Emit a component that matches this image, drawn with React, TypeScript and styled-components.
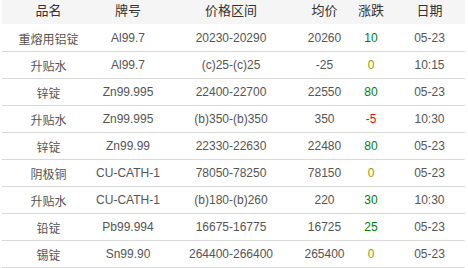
import React from 'react';
import styled, { createGlobalStyle } from 'styled-components';

const GlobalStyle = createGlobalStyle`
  html, body {
    margin: 0;
    padding: 0;
    background: #fff;
  }
  body {
    font-family: "Liberation Sans", Arial, "Noto Sans CJK SC", sans-serif;
  }
`;

const Wrapper = styled.div`
  padding: 0 3px 0 2px;
  width: 463px;
`;

const Table = styled.table`
  width: 463px;
  border-collapse: collapse;
  table-layout: fixed;
`;

const HeadCell = styled.th`
  height: 24px;
  padding: 0;
  background: #f5f5f5;
  border-bottom: 1px solid #fff;
  color: #333;
  font-size: 13px;
  font-weight: normal;
  text-align: center;
  line-height: 22px;
  vertical-align: top;
`;

const Row = styled.tr`
  border-bottom: 1px solid #d9d9d9;
`;

const Cell = styled.td`
  height: 26px;
  padding: 0;
  color: #555;
  font-size: 12px;
  text-align: center;
  vertical-align: middle;
  white-space: nowrap;
`;

const Change = styled(Cell)<{ $tone: 'up' | 'down' | 'flat' }>`
  color: ${p => (p.$tone === 'up' ? '#008000' : p.$tone === 'down' ? '#ff0000' : '#999900')};
`;

interface Quote {
  name: string;
  brand: string;
  range: string;
  avg: string;
  change: number;
  date: string;
}

const columns = [
  { title: '品名', width: 93 },
  { title: '牌号', width: 66 },
  { title: '价格区间', width: 140 },
  { title: '均价', width: 47 },
  { title: '涨跌', width: 46 },
  { title: '日期', width: 71 },
];

const quotes: Quote[] = [
  { name: '重熔用铝锭', brand: 'Al99.7', range: '20230-20290', avg: '20260', change: 10, date: '05-23' },
  { name: '升贴水', brand: 'Al99.7', range: '(c)25-(c)25', avg: '-25', change: 0, date: '10:15' },
  { name: '锌锭', brand: 'Zn99.995', range: '22400-22700', avg: '22550', change: 80, date: '05-23' },
  { name: '升贴水', brand: 'Zn99.995', range: '(b)350-(b)350', avg: '350', change: -5, date: '10:30' },
  { name: '锌锭', brand: 'Zn99.99', range: '22330-22630', avg: '22480', change: 80, date: '05-23' },
  { name: '阴极铜', brand: 'CU-CATH-1', range: '78050-78250', avg: '78150', change: 0, date: '05-23' },
  { name: '升贴水', brand: 'CU-CATH-1', range: '(b)180-(b)260', avg: '220', change: 30, date: '10:30' },
  { name: '铅锭', brand: 'Pb99.994', range: '16675-16775', avg: '16725', change: 25, date: '05-23' },
  { name: '锡锭', brand: 'Sn99.90', range: '264400-266400', avg: '265400', change: 0, date: '05-23' },
];

function App() {
  return (
    <Wrapper>
      <GlobalStyle />
      <Table>
        <colgroup>
          {columns.map(c => <col key={c.title} width={c.width} />)}
        </colgroup>
        <thead>
          <tr>
            {columns.map(c => <HeadCell key={c.title}>{c.title}</HeadCell>)}
          </tr>
        </thead>
        <tbody>
          {quotes.map((q, i) => (
            <Row key={i}>
              <Cell>{q.name}</Cell>
              <Cell>{q.brand}</Cell>
              <Cell>{q.range}</Cell>
              <Cell>{q.avg}</Cell>
              <Change $tone={q.change > 0 ? 'up' : q.change < 0 ? 'down' : 'flat'}>{q.change}</Change>
              <Cell>{q.date}</Cell>
            </Row>
          ))}
        </tbody>
      </Table>
    </Wrapper>
  );
}

export default App;
